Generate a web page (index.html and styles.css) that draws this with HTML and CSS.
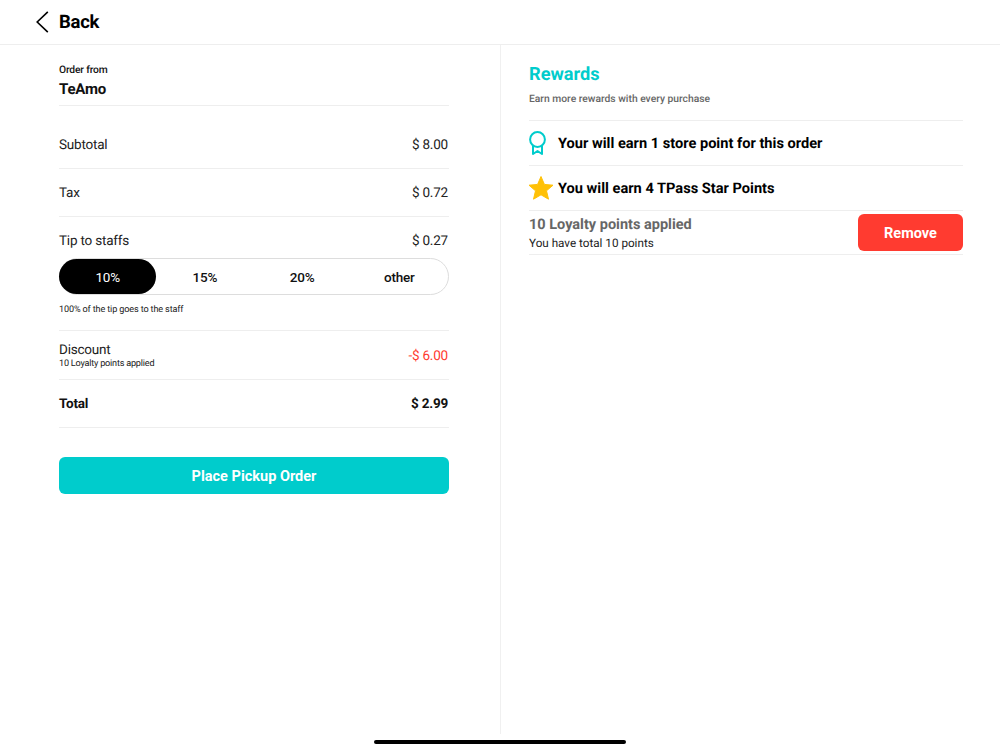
FILE: index.html
```html
<!DOCTYPE html>
<html lang="en">
<head>
  <meta charset="UTF-8" />
  <title>Checkout</title>
  <link rel="stylesheet" href="styles.css">
</head>
<body>
  <!-- top bar -->
  <header class="topbar">
    <svg class="back-icon" width="14" height="22" viewBox="0 0 14 22"><path d="M12.8.8 2.2 11l10.6 10.2" fill="none" stroke="#000" stroke-width="1.6"/></svg>
    <span class="back-label">Back</span>
  </header>

  <main class="columns">
    <!-- order summary -->
    <section class="order">
      <div class="order-from">
        <p class="from-label">Order from</p>
        <p class="from-name">TeAmo</p>
      </div>

      <div class="row"><span>Subtotal</span><span>$ 8.00</span></div>
      <div class="row"><span>Tax</span><span>$ 0.72</span></div>

      <div class="tip">
        <div class="tip-head"><span>Tip to staffs</span><span>$ 0.27</span></div>
        <div class="tip-options">
          <button class="tip-btn active">10%</button>
          <button class="tip-btn">15%</button>
          <button class="tip-btn">20%</button>
          <button class="tip-btn">other</button>
        </div>
        <p class="tip-note">100% of the tip goes to the staff</p>
      </div>

      <div class="row discount">
        <div>
          <p class="discount-label">Discount</p>
          <p class="discount-note">10 Loyalty points applied</p>
        </div>
        <span class="discount-value">-$ 6.00</span>
      </div>
      <div class="row total"><span>Total</span><span>$ 2.99</span></div>

      <button class="place-order">Place Pickup Order</button>
    </section>

    <!-- rewards -->
    <section class="rewards">
      <h2>Rewards</h2>
      <p class="rewards-sub">Earn more rewards with every purchase</p>

      <div class="reward-row first">
        <svg width="17" height="24" viewBox="0 0 17 24"><circle cx="8.5" cy="8.5" r="7.4" fill="none" stroke="#00cccc" stroke-width="2"/><path d="M4 15v8l4.5-3 4.5 3v-8" fill="none" stroke="#00cccc" stroke-width="2" stroke-linejoin="round"/></svg>
        <span>Your will earn 1 store point for this order</span>
      </div>
      <div class="reward-row">
        <svg class="star" width="24" height="24" viewBox="0 0 24 24"><path d="M12 .5l3.4 7.9 8.6.8-6.5 5.6 2 8.4L12 18.8l-7.5 4.4 2-8.4L0 9.2l8.6-.8z" fill="#ffc107" stroke="#ffc107" stroke-linejoin="round"/></svg>
        <span>You will earn 4 TPass Star Points</span>
      </div>
      <div class="loyalty-row">
        <div class="loyalty-text">
          <p class="loyalty-title">10 Loyalty points applied</p>
          <p class="loyalty-sub">You have total 10 points</p>
        </div>
        <button class="remove">Remove</button>
      </div>
    </section>
  </main>

  <div class="home-bar"></div>
</body>
</html>
```

FILE: styles.css
```css
*,*::before,*::after{box-sizing:border-box;margin:0;padding:0}

html,body{width:100%;height:100%;overflow:hidden;background:#fff;color:#000;font-family:Roboto,"Liberation Sans",sans-serif;text-rendering:geometricPrecision}
button{font-family:inherit;border:none;cursor:pointer}

/* ---------- TOP BAR ---------- */
.topbar{height:45px;display:flex;align-items:center;padding-left:35px;border-bottom:1px solid #eeeeee}
.back-icon{margin-right:10px}
.back-label{font-size:18.5px;font-weight:700;line-height:1;letter-spacing:-.015em}

/* ---------- COLUMNS ---------- */
.columns{display:flex;height:689px}

/* ---------- ORDER ---------- */
.order{width:501px;padding:0 51px 0 59px;border-right:1px solid #f0f0f0}
.order-from{height:61px;padding-top:18px;border-bottom:1px solid #eeeeee}
.from-label{font-size:10.3px;font-weight:500;line-height:13px;letter-spacing:-.015em;color:#111}
.from-name{font-size:15px;font-weight:700;line-height:19px;letter-spacing:-.015em;margin-top:4px;color:#111}
.row{height:48px;padding:1px 1px 0 0;display:flex;justify-content:space-between;align-items:center;font-size:13.5px;letter-spacing:-.015em;color:#222;border-bottom:1px solid #eeeeee}
.order-from + .row{height:63px;padding-top:16px}
.row.discount{height:49px;padding-top:2px}
.discount-label{font-size:13.5px;line-height:15px;color:#222}
.discount-note{font-size:9.1px;line-height:12px;color:#222}
.discount-value{color:#ff3b30}
.total{font-weight:700;color:#111}

.tip{height:114px;border-bottom:1px solid #eeeeee}
.tip-head{height:41px;padding:7px 1px 0 0;display:flex;justify-content:space-between;align-items:center;font-size:13.5px;letter-spacing:-.015em;color:#222}
.tip-options{height:37px;display:flex;border:1px solid #dddddd;border-radius:19px}
.tip-btn{flex:1;background:none;font-size:13.5px;font-weight:500;letter-spacing:-.015em;color:#111;border-radius:18px}
.tip-btn.active{margin-left:-1px;background:#000;color:#fff;font-weight:400}
.tip-note{font-size:9.1px;line-height:12px;letter-spacing:-.015em;margin-top:9px;color:#222}

.place-order{display:block;width:100%;height:37px;padding-top:1px;margin-top:29px;background:#00cccc;color:#fff;font-size:14.5px;font-weight:700;border-radius:6px}

/* ---------- REWARDS ---------- */
.rewards{flex:1;padding:0 37px 0 28px}
.rewards h2{font-size:18.2px;font-weight:700;line-height:22px;margin-top:19px;color:#00cccc}
.rewards-sub{font-size:10.3px;font-weight:500;line-height:12px;margin-top:7px;color:#666}
.reward-row{height:45px;display:flex;align-items:center;gap:12px;font-size:14.6px;font-weight:700;border-bottom:1px solid #eeeeee}
.reward-row.first{margin-top:15px;height:46px;border-top:1px solid #eeeeee}
.reward-row .star{margin-right:-7px}
.loyalty-row{height:44px;display:flex;justify-content:space-between;align-items:flex-start;border-bottom:1px solid #eeeeee}
.loyalty-text{margin-top:5px}
.loyalty-title{font-size:14.5px;font-weight:700;line-height:17px;color:#666}
.loyalty-sub{font-size:11.7px;line-height:14px;margin-top:3px;color:#222}
.remove{width:105px;height:37px;padding-top:2px;margin-top:3px;background:#ff3b30;color:#fff;font-size:14.5px;font-weight:700;border-radius:6px}

/* ---------- HOME INDICATOR ---------- */
.home-bar{position:absolute;left:374px;top:740px;width:252px;height:4px;background:#000;border-radius:2px}
```
